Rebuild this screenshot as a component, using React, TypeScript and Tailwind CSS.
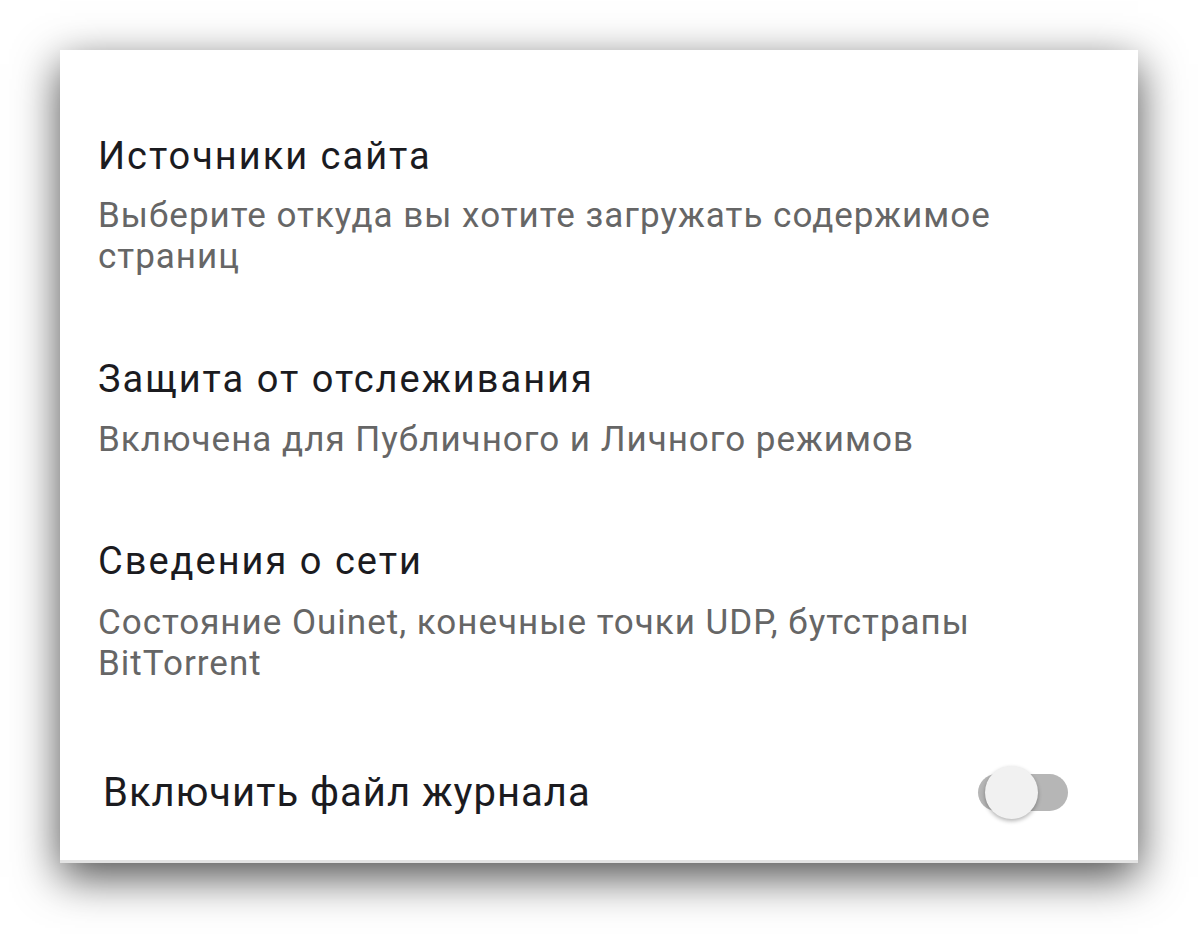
import type { ReactNode } from 'react'

function Pref({
  title,
  summary,
  gapTop,
  gapSummary
}: {
  title: string
  summary: ReactNode
  gapTop: string
  gapSummary: string
}): JSX.Element {
  return (
    <div className={gapTop}>
      <p className="text-[38px] leading-[44px] tracking-[2px] text-[#1b1b1f]">{title}</p>
      <p className={`${gapSummary} text-[35px] leading-[41px] tracking-[1px] text-[#666666]`}>
        {summary}
      </p>
    </div>
  )
}

function Switch(): JSX.Element {
  return (
    <div className="relative h-[53px] w-[90px]">
      <div className="absolute left-0 top-[8px] h-[37px] w-[90px] rounded-full bg-[#b6b6b6]" />
      <div className="absolute left-[7px] top-0 h-[53px] w-[53px] rounded-full bg-[#f1f1f1] shadow-[0_2px_4px_rgba(0,0,0,0.3)]" />
    </div>
  )
}

export default function App(): JSX.Element {
  return (
    <div className="min-h-screen bg-white pl-[60px] pt-[50px] font-['Roboto',sans-serif]">
      <div className="w-[1078px] bg-white shadow-[0_14px_42px_rgba(0,0,0,0.7)]">
        <div className="pl-[38px] pr-[70px] pt-[84px]">
          <Pref
            title="Источники сайта"
            summary={
              <>
                Выберите откуда вы хотите загружать содержимое
                <br />
                страниц
              </>
            }
            gapTop="mt-0"
            gapSummary="mt-[17px]"
          />
          <Pref
            title="Защита от отслеживания"
            summary="Включена для Публичного и Личного режимов"
            gapTop="mt-[80px]"
            gapSummary="mt-[18px]"
          />
          <Pref
            title="Сведения о сети"
            summary={
              <>
                Состояние Ouinet, конечные точки UDP, бутстрапы
                <br />
                BitTorrent
              </>
            }
            gapTop="mt-[79px]"
            gapSummary="mt-[19px]"
          />
          <div className="mt-[82px] flex items-center justify-between pb-[41px]">
            <p className="pl-[5px] text-[40px] leading-[48px] tracking-[1px] text-[#1b1b1f]">
              Включить файл журнала
            </p>
            <Switch />
          </div>
        </div>
        <div className="h-[3px] bg-[#e3e3e3]" />
      </div>
    </div>
  )
}
